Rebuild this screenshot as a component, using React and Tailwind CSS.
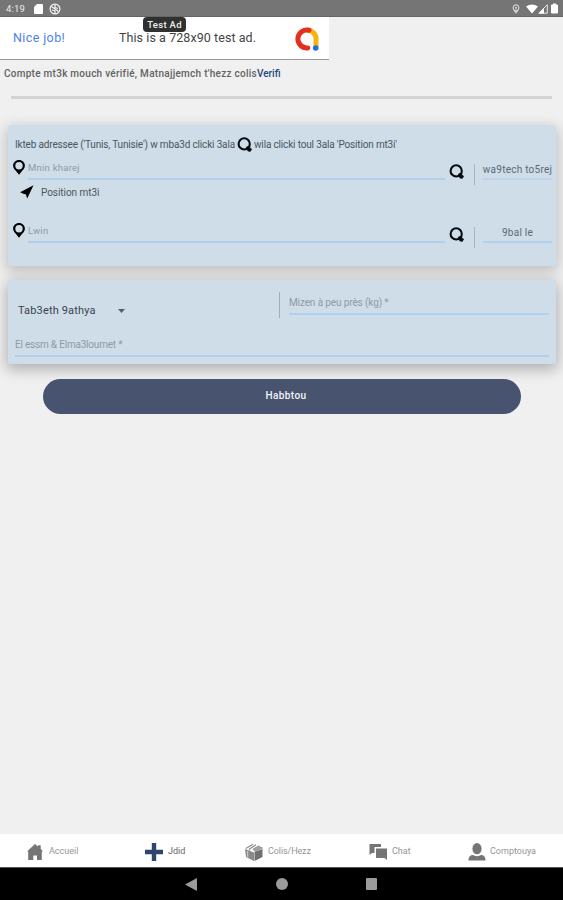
import React from 'react';

const Search = ({ className = '' }) => (
  <svg viewBox="0 0 15 15" className={`h-[15px] w-[15px] shrink-0 ${className}`}>
    <circle cx="7.200" cy="6.900" r="5.600" fill="none" stroke="#050b10" strokeWidth="2.100" />
    <path d="M9.300 10.200l1.800-1 3.600 3-1.500 2.300-2.400-.6z" fill="#050b10" stroke="#050b10" strokeWidth=".6" strokeLinejoin="round" />
  </svg>
);

const Pin = () => (
  <svg viewBox="0 0 12 15" className="h-[15px] w-[12px] shrink-0">
    <path
      fillRule="evenodd"
      fill="#000"
      d="M6 0C2.600 0 .1 2.500.1 5.800c0 2.600 2.200 4.400 3.700 6.200L6 14.800 8.200 12c1.500-1.800 3.700-3.600 3.700-6.200C11.900 2.500 9.400 0 6 0zM6 2.100a3.700 3.700 0 1 1 0 7.400 3.700 3.700 0 0 1 0-7.400z"
    />
  </svg>
);

function AddressRow({ label, time, timeClass, lineClass }) {
  return (
    <div className="flex h-[28px] items-start pl-[5px] pr-[4px]">
      <Pin />
      <div className="ml-[3px] h-[20px] w-[417px] border-b-2 border-[#afcfed] text-[9.5px] leading-[16px] tracking-[0.25px] text-[#8d9ba6]">
        {label}
      </div>
      <Search className="ml-[4px] mt-[4px]" />
      <div className="ml-[10px] mt-[4px] h-[21px] w-px bg-[#a9b5bf]" />
      <div className={`ml-[8px] mt-[3px] flex h-[17px] w-[69px] justify-center border-b-2 text-[10px] leading-[13px] tracking-[0.25px] text-[#5c6a76] ${lineClass}`}>
        <span className={timeClass}>{time}</span>
      </div>
    </div>
  );
}

function StatusBar() {
  return (
    <div className="flex h-[17px] items-center border-b border-[#656565] bg-[#757575] pl-[6px] pr-[5px] pt-px text-white">
      <span className="w-[28px] text-[9.5px] leading-none tracking-[0.2px] text-[#ededed]">4:19</span>
      <svg viewBox="0 0 9 10" className="h-[10px] w-[9px]">
        <path d="M3 0h5q1 0 1 1v8q0 1-1 1H1q-1 0-1-1V3z" fill="#fff" />
      </svg>
      <svg viewBox="0 0 12 12" className="ml-[6px] h-[12px] w-[12px]" fill="none" stroke="#f1f1f1">
        <circle cx="6" cy="6" r="4.900" strokeWidth="1.200" />
        <path d="M2.500 3.500l7 5M6 1.500v3l3 1M3 7l3 1v3" strokeWidth="1.300" />
      </svg>
      <svg viewBox="0 0 8 10" className="ml-auto h-[10px] w-[8px]">
        <path fillRule="evenodd" fill="#d0d0d0" d="M4 .3C1.900.3.600 1.900.600 3.800.600 6.300 4 9.700 4 9.700s3.400-3.400 3.400-5.900C7.400 1.900 6.100.3 4 .3zM4 1.600a2.200 2.200 0 1 1 0 4.400 2.200 2.200 0 0 1 0-4.400z" />
        <circle cx="4" cy="3.800" r="1.100" fill="#d0d0d0" />
      </svg>
      <svg viewBox="0 0 12 10" className="ml-[6px] h-[10px] w-[12px]">
        <path d="M0 2.500Q6-1.500 12 2.500L6 9.500z" fill="#fff" />
      </svg>
      <svg viewBox="0 0 10 10" className="h-[10px] w-[10px]">
        <path d="M.8 9.200L9.300.8v8.400z" fill="none" stroke="#e8e8e8" />
        <path d="M.5 9.500L6 4v5.500z" fill="#fff" />
      </svg>
      <svg viewBox="0 0 7 10" className="ml-[3px] h-[11px] w-[7px]">
        <path d="M2 0h3v1h1q1 0 1 1v7q0 1-1 1H1q-1 0-1-1V2q0-1 1-1h1z" fill="#fff" />
      </svg>
    </div>
  );
}

function AdBanner() {
  return (
    <div className="relative flex h-[43px] w-[329px] items-center border-b border-[#999] bg-white pl-[13px] text-[12.500px]">
      <span className="w-[106px] tracking-[0.4px] text-[#4d82ec]">Nice job!</span>
      <span className="w-[176px] whitespace-nowrap tracking-[0.07px] text-[#444]">This is a 728x90 test ad.</span>
      <svg viewBox="0 0 24 24" className="mt-px h-[24px] w-[24px] shrink-0" fill="none" strokeWidth="5">
        <path d="M12 3a9 9 0 0 1 9 9v8.500" stroke="#fbb20f" />
        <path d="M14 3.200a9 9 0 1 0-1.200 17.700" stroke="#e32f20" strokeLinecap="round" />
        <circle cx="20.700" cy="21" r="2.800" fill="#1b6ee8" />
      </svg>
      <div className="absolute left-[143px] top-0 h-[15px] w-[43px] rounded-[4px] bg-[#303030] text-center text-[9.500px] font-medium leading-[16px] tracking-[0.3px] text-[#eee]">
        Test Ad
      </div>
    </div>
  );
}

function BottomNav() {
  return (
    <div className="flex h-[33px] items-center bg-white pt-[2px] text-[9px] text-[#959595]">
      <div className="flex w-[145px] shrink-0 items-center pl-[27px]">
        <svg viewBox="0 0 16 16" className="h-[16px] w-[16px]">
          <path d="M8 0l3 2.500V1.200h2.700v3.600L16 7.500h-1.200V16H10v-4.500H6.300V16H1.200V7.500H0z" fill="#757575" />
        </svg>
        <span className="ml-[6px] mt-px">Accueil</span>
      </div>
      <div className="flex w-[100px] shrink-0 items-center">
        <svg viewBox="0 0 18 18" className="h-[18px] w-[18px]">
          <path d="M6.800 0h4.400v6.800H18v4.400h-6.800V18H6.800v-6.800H0V6.800h6.800z" fill="#2f456e" />
        </svg>
        <span className="ml-[5px] mt-px text-[#666]">Jdid</span>
      </div>
      <div className="flex w-[124px] shrink-0 items-center">
        <svg viewBox="0 0 18 18" className="h-[18px] w-[18px]">
          <path d="M0 6l9 3.500V18L1 14z" fill="#8a8a8a" />
          <path d="M9.500 9L17.500 6v8l-8 4z" fill="#6f6f6f" />
          <path d="M.8 5.500L8 1.300M4.500 7.500V6L11 1.800" fill="none" stroke="#8a8a8a" strokeWidth="1.200" />
          <path d="M8 6l5.500-3L17.500 5l-7.500 3.500z" fill="#a5a5a5" stroke="#777" strokeWidth=".6" />
          <path d="M2.700 8v6" fill="none" stroke="#d5d5d5" />
        </svg>
        <span className="ml-[5px] mt-px tracking-[-0.1px]">Colis/Hezz</span>
      </div>
      <div className="flex w-[99px] shrink-0 items-center">
        <svg viewBox="0 0 18 16" className="h-[16px] w-[18px]" fill="#757575">
          <path d="M.5 0H12v3H5.500v6H3L.5 11z" />
          <path d="M7 4.500h11V16l-2.500-2H7z" />
        </svg>
        <span className="ml-[5px] mt-px">Chat</span>
      </div>
      <div className="flex shrink-0 items-center">
        <svg viewBox="0 0 18 18" className="h-[18px] w-[18px]" fill="#757575">
          <ellipse cx="9" cy="5.700" rx="4.600" ry="5.600" />
          <path d="M.5 17.500c0-4 2-5.500 4.500-5.500 2 1.500 6 1.500 8 0 2.500 0 4.500 1.500 4.500 5.500z" />
        </svg>
        <span className="ml-[4px] mt-px">Comptouya</span>
      </div>
    </div>
  );
}

export default function App() {
  return (
    <div className="flex h-[900px] w-[563px] flex-col overflow-hidden bg-[#f0f0f0] font-['Roboto','Liberation_Sans',sans-serif]">
      <StatusBar />
      <AdBanner />
      <div className="h-[36px] whitespace-nowrap pl-[4px] pt-[6px] text-[10px] font-medium leading-[16px] text-[#636363]">
        <span className="tracking-[0.27px]">Compte mt3k mouch vérifié, Matnajjemch t'hezz colis</span>
        <span className="text-[#234a7c]">Verifi</span>
      </div>
      <div className="ml-[11px] h-[3px] w-[541px] shrink-0 bg-[#d3d3d3]" />

      <div className="ml-[8px] mt-[26px] h-[141px] w-[548px] shrink-0 rounded-[3px] bg-[#cfdde8] shadow-[0_4px_14px_2px_rgba(0,0,0,0.2)]">
        <div className="flex h-[35px] items-center whitespace-nowrap pl-[7px] pt-[3px] text-[10px] tracking-[-0.16px] text-[#4a5660]">
          <span className="w-[222px]">Ikteb adressee ('Tunis, Tunisie') w mba3d clicki 3ala</span>
          <Search />
          <span className="ml-[2px]">wila clicki toul 3ala 'Position mt3i'</span>
        </div>
        <AddressRow label="Mnin kharej" time="wa9tech to5rej" timeClass="whitespace-nowrap" lineClass="border-[#bfd3ee]" />
        <div className="flex h-[35px] items-start pl-[12px] text-[10px] leading-[12px] text-[#4a5660]">
          <svg viewBox="0 0 14 14" className="-mt-[3px] h-[14px] w-[14px]">
            <path d="M13.500.3L7.200 13.400 5.800 9.200 3.800 8.900.1 7.200z" fill="#000" />
          </svg>
          <span className="-mt-px ml-[7px] tracking-[-0.05px]">Position mt3i</span>
        </div>
        <AddressRow label="Lwin" time="9bal le" timeClass="" lineClass="border-[#b3d1ee]" />
      </div>

      <div className="ml-[8px] mt-[14px] h-[84px] w-[548px] shrink-0 rounded-[3px] bg-[#cfdde8] pt-px shadow-[0_4px_14px_2px_rgba(0,0,0,0.26)]">
        <div className="flex h-[53px]">
          <div className="flex h-[59px] w-[271px] items-center pl-[10px] text-[11px] text-[#3a434b]">
            <span className="mt-px w-[100px] tracking-[0.15px]">Tab3eth 9athya</span>
            <svg viewBox="0 0 7 4" className="h-[4px] w-[7px]">
              <path d="M0 0h7L3.500 4z" fill="#53616d" />
            </svg>
          </div>
          <div className="mt-[11px] h-[26px] w-px bg-[#a2afba]" />
          <div className="ml-[9px] mt-[13px] h-[21px] w-[260px] border-b-2 border-[#afd0ee] text-[10px] leading-[17px] tracking-[-0.12px] text-[#8d9ba6]">
            Mizen à peu près (kg) *
          </div>
        </div>
        <div className="ml-[7px] h-[23px] w-[534px] border-b-2 border-[#afd0ee] pt-[2px] text-[10px] leading-[17px] tracking-[-0.2px] text-[#8d9ba6]">
          El essm &amp; Elma3loumet *
        </div>
      </div>

      <button className="ml-[43px] mt-[15px] h-[35px] w-[478px] shrink-0 rounded-full bg-[#48536f] pb-[2px] pl-[8px] text-[10px] font-medium tracking-[0.4px] text-[#f1f3f7]">
        Habbtou
      </button>

      <div className="flex-1" />
      <BottomNav />
      <div className="flex h-[33px] shrink-0 items-center border-t border-[#555] bg-black pl-[185px]">
        <svg viewBox="0 0 12 13" className="h-[13px] w-[12px]">
          <path d="M12 0v13L0 6.500z" fill="#9b9b9b" />
        </svg>
        <div className="ml-[79px] h-[12px] w-[12px] rounded-full bg-[#9b9b9b]" />
        <div className="ml-[78px] h-[12px] w-[11px] rounded-[1px] bg-[#9b9b9b]" />
      </div>
    </div>
  );
}
